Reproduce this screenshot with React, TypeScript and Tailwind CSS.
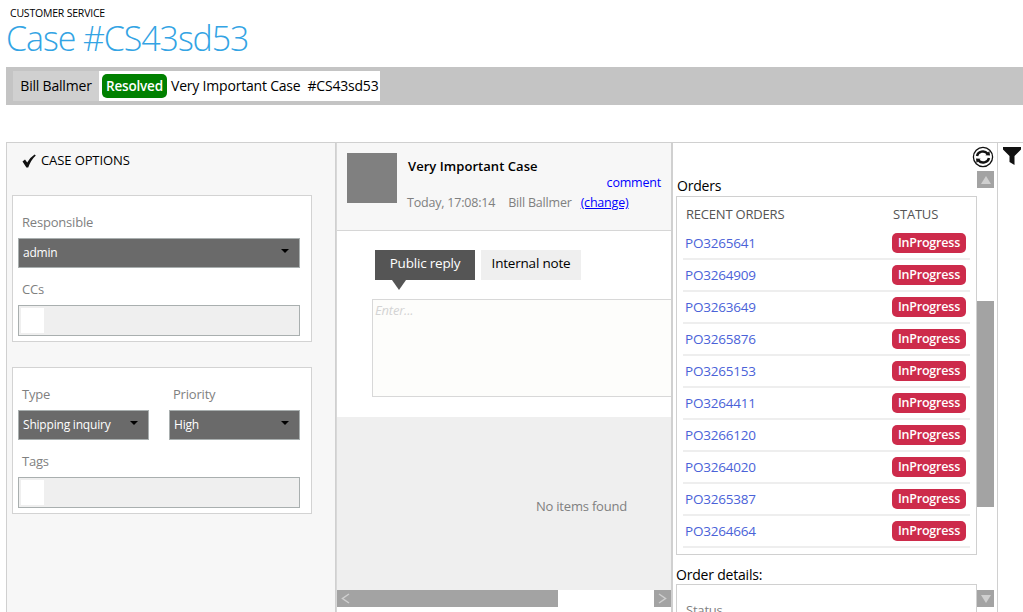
const orders = [
  'PO3265641',
  'PO3264909',
  'PO3263649',
  'PO3265876',
  'PO3265153',
  'PO3264411',
  'PO3266120',
  'PO3264020',
  'PO3265387',
  'PO3264664',
];

function Select({ value, className }: { value: string; className: string }) {
  return (
    <div className={`flex h-[30px] items-center justify-between border border-[#a9afaf] bg-[#6a6a6a] pl-1 pr-[10px] text-[12px] text-white ${className}`}>
      <span>{value}</span>
      <span className="mb-[4px] h-0 w-0 border-x-[4px] border-t-[4px] border-x-transparent border-t-black" />
    </div>
  );
}

function TagInput() {
  return (
    <div className="h-[31px] border border-[#a9afaf] bg-[#efefef] p-[2px]">
      <div className="h-[25px] w-[23px] bg-white" />
    </div>
  );
}

function Label({ children }: { children: string }) {
  return <div className="h-[16px] pl-1 text-[13px] leading-[16px] text-[#7f7f7f]">{children}</div>;
}

function CaseOptions() {
  return (
    <div className="h-full w-[330px] shrink-0 border-x border-x-[#d0d0d0] bg-[#f7f7f7] pl-[5px] pt-[7px]">
      <div className="flex h-[20px] items-center pl-[10px] text-[13px] leading-[20px] tracking-[-0.1px] text-black">
        <svg viewBox="0 0 14 14" className="mb-[-2px] mr-[5px] h-[14px] w-[14px]">
          <path d="M0.5 7.5 L3 5.5 L5.2 8.4 Q8.5 3 12.6 0.5 L13.8 1.6 Q9 6 6.2 13.6 L4.4 13.6 Z" fill="#111" />
        </svg>
        CASE OPTIONS
      </div>
      <div className="mt-[25px] h-[147px] w-[300px] border border-[#d3d3d3] bg-white pl-[5px] pr-[11px] pt-[18px]">
        <Label>Responsible</Label>
        <Select value="admin" className="mt-[8px]" />
        <div className="mt-[13px]"><Label>CCs</Label></div>
        <div className="mt-[8px]"><TagInput /></div>
      </div>
      <div className="mt-[25px] h-[147px] w-[300px] border border-[#d3d3d3] bg-white pl-[5px] pr-[11px] pt-[18px]">
        <div className="flex gap-[20px]">
          <div className="w-[131px]">
            <Label>Type</Label>
            <Select value="Shipping inquiry" className="mt-[8px]" />
          </div>
          <div className="w-[131px]">
            <Label>Priority</Label>
            <Select value="High" className="mt-[8px]" />
          </div>
        </div>
        <div className="mt-[13px]"><Label>Tags</Label></div>
        <div className="mt-[8px]"><TagInput /></div>
      </div>
    </div>
  );
}

function CaseDetail() {
  return (
    <div className="flex h-full w-[337px] shrink-0 flex-col border-l border-r-2 border-l-[#d8d8d8] border-r-[#d0d0d0] bg-white pb-[5px]">
      <div className="flex h-[88px] shrink-0 border-b border-b-[#d6d6d6] bg-[#f7f7f7] pl-[10px] pr-[10px] pt-[10px]">
        <div className="h-[50px] w-[50px] shrink-0 bg-[#808080]" />
        <div className="ml-[10px] flex-1">
          <div className="mt-[4px] pl-[1px] text-[13px] font-semibold leading-[18px] tracking-[0.05px] text-black">Very Important Case</div>
          <div className="text-right text-[12.5px] leading-[15px] text-[#0000ff]">comment</div>
          <div className="mt-[5px] flex text-[12.5px] leading-[16px] text-[#808080]">
            <span>Today, 17:08:14</span>
            <span className="ml-[13px]">Bill Ballmer</span>
            <a className="ml-[9px] text-[#0000ff] underline">(change)</a>
          </div>
        </div>
      </div>
      <div className="relative h-[186px] shrink-0 bg-white">
        <div className="flex gap-[6px] pl-[38px] pt-[19px] text-[13.5px] leading-[27px]">
          <div className="relative h-[30px] w-[100px] bg-[#555555] text-center text-white">
            Public reply
            <span className="absolute left-[17px] top-[30px] h-0 w-0 border-x-[7px] border-t-[10px] border-x-transparent border-t-[#555555]" />
          </div>
          <div className="h-[30px] w-[100px] bg-[#efefef] text-center text-black">Internal note</div>
        </div>
        <div className="ml-[35px] mt-[19px] h-[98px] border border-r-0 border-[#d8d8d8] bg-[#fdfdfb] pl-[2px] text-[13px] italic leading-[20px] text-[#d4d4d4]">
          Enter...
        </div>
      </div>
      <div className="flex flex-1 items-center justify-end bg-[#efefef] pr-[44px] pt-[6px] text-[13px] text-[#808080]">
        No items found
      </div>
      <div className="flex h-[17px] shrink-0 bg-white">
        <div className="flex w-[221px] items-center bg-[#a3a3a3] pl-[4px]">
          <svg viewBox="0 0 9 11" className="h-[11px] w-[9px]" fill="none">
            <path d="M8 1 L1.5 5.5 L8 10" stroke="#cfcfcf" strokeWidth="1.5" />
          </svg>
        </div>
        <div className="flex-1" />
        <div className="flex w-[17px] items-center justify-center bg-[#a3a3a3]">
          <svg viewBox="0 0 9 11" className="h-[11px] w-[9px]" fill="none">
            <path d="M1 1 L7.5 5.5 L1 10" stroke="#cfcfcf" strokeWidth="1.5" />
          </svg>
        </div>
      </div>
    </div>
  );
}

function Orders() {
  return (
    <div className="relative flex h-full w-[325px] shrink-0 overflow-hidden border-r border-r-[#d0d0d0] bg-white">
      <div className="w-[304px] shrink-0 pl-[3px] pt-[33px]">
        <div className="h-[20px] pl-[1px] text-[14px] leading-[19px] text-black">Orders</div>
        <div className="h-[359px] w-[301px] border border-[#d0d0d0] px-[6px] pt-[7px]">
          <div className="flex h-[24px] text-[13px] leading-[20px] text-[#555555]">
            <span className="ml-[3px] w-[207px]">RECENT ORDERS</span>
            <span>STATUS</span>
          </div>
          {orders.map((po) => (
            <div key={po} className="flex h-[32px] items-center justify-between border-b-2 border-b-[#eeeeee] pr-[4px]">
              <a className="ml-[2px] text-[13.5px] text-[#4a62d8]">{po}</a>
              <span className="h-[20px] w-[74px] rounded-[5px] bg-[#cd2b4b] text-center text-[12.5px] font-semibold leading-[20px] text-white">InProgress</span>
            </div>
          ))}
        </div>
        <div className="mt-[11px] text-[14px] leading-[18px] text-black">Order details:</div>
        <div className="h-[60px] w-[301px] border border-[#d0d0d0] px-[9px] pt-[16px] text-[13px] text-[#7f7f7f]">Status</div>
      </div>
      <div className="mt-[28px] flex h-[436px] w-[17px] shrink-0 flex-col">
        <div className="flex h-[17px] items-center justify-center bg-[#a3a3a3]">
          <span className="h-0 w-0 border-x-[5px] border-b-[8px] border-x-transparent border-b-[#cfcfcf]" />
        </div>
        <div className="mt-[113px] h-[206px] bg-[#a3a3a3]" />
        <div className="mt-[83px] flex h-[17px] items-center justify-center bg-[#a3a3a3]">
          <span className="h-0 w-0 border-x-[5px] border-t-[8px] border-x-transparent border-t-[#cfcfcf]" />
        </div>
      </div>
      <svg viewBox="0 0 22 22" className="absolute left-[299px] top-[3px] h-[22px] w-[22px]" fill="none">
        <circle cx="11" cy="11" r="9.6" stroke="#111" strokeWidth="1.3" />
        <path d="M5 10 A6 5.5 0 0 1 15.6 7.6" stroke="#111" strokeWidth="2.4" />
        <path d="M17 12 A6 5.5 0 0 1 6.4 14.4" stroke="#111" strokeWidth="2.4" />
        <path d="M13.4 9.2 L18 9.6 L17.4 5 Z" fill="#111" />
        <path d="M8.6 12.8 L4 12.4 L4.6 17 Z" fill="#111" />
      </svg>
    </div>
  );
}

export default function App() {
  return (
    <div className="h-[612px] w-[1023px] overflow-hidden bg-white font-['Open_Sans','Noto_Sans',sans-serif] tracking-[-0.2px]">
      <div className="h-[67px] pl-[6px] pt-[7px]">
        <div className="pl-[4px] text-[10.5px] leading-[13px] text-black">CUSTOMER SERVICE</div>
        <div className="text-[34px] font-light leading-[36px] tracking-[-1.1px] text-[#33a4e4]">Case #CS43sd53</div>
      </div>
      <div className="ml-[6px] flex h-[38px] items-center bg-[#c4c4c4] pl-[7px] text-[14px] text-black">
        <div className="flex h-[30px] w-[86px] items-center justify-center bg-[#d0d0d0] pb-[1px]">Bill Ballmer</div>
        <div className="flex h-[30px] w-[281px] items-center bg-white pl-[3px]">
          <span className="flex h-[24px] w-[65px] items-center justify-center rounded-[5px] bg-[#008000] text-[13.5px] font-semibold text-white">Resolved</span>
          <span className="ml-[4px] pb-[1px]">Very Important Case</span>
          <span className="ml-[7px] pb-[1px]">#CS43sd53</span>
        </div>
      </div>
      <div className="relative ml-[6px] mt-[37px] flex h-[470px] border-t border-t-[#d0d0d0]">
        <CaseOptions />
        <CaseDetail />
        <Orders />
        <svg viewBox="0 0 18 18" className="ml-[5px] mt-[4px] h-[18px] w-[18px]">
          <path d="M0 0 H18 V2.5 L11.5 9 V18 L6.5 15 V9 L0 2.5 Z" fill="#111" />
        </svg>
      </div>
    </div>
  );
}
